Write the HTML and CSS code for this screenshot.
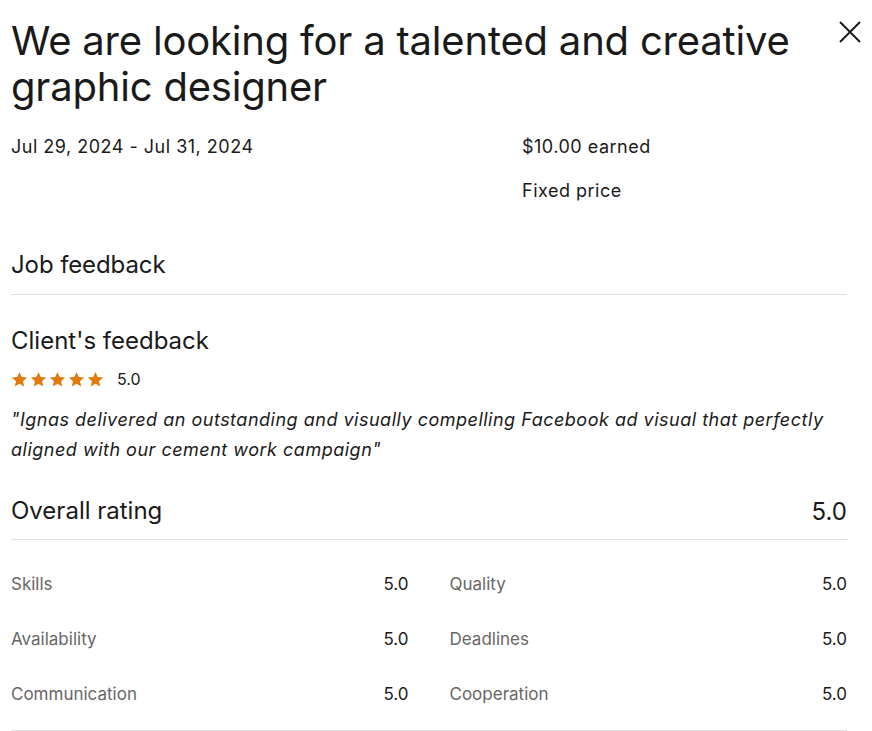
FILE: index.html
```html
<!DOCTYPE html>
<html lang="en">
<head>
<meta charset="UTF-8">
<meta name="viewport" content="width=device-width, initial-scale=1.0">
<title>Job feedback</title>
<link rel="stylesheet" href="styles.css">
</head>
<body>

<div class="modal">
    <div class="header">
        <h1 class="title">We are looking for a talented and creative graphic designer</h1>
        <button class="close" aria-label="Close">
            <svg width="24" height="24" viewBox="0 0 24 24"><path d="M2 2 L22 22 M22 2 L2 22" stroke="#1a1a1a" stroke-width="2" fill="none"/></svg>
        </button>
    </div>

    <div class="meta">
        <div class="meta-col">
            <p>Jul 29, 2024 - Jul 31, 2024</p>
        </div>
        <div class="meta-col">
            <p>$10.00 earned</p>
            <p>Fixed price</p>
        </div>
    </div>

    <h2 class="section-title">Job feedback</h2>
    <hr>

    <h3 class="sub-title">Client's feedback</h3>
    <div class="stars">
        <svg width="17" height="17" viewBox="0 0 24 24"><path d="M12 1.5l3.1 7.1 7.7.7-5.8 5.1 1.7 7.6L12 18l-6.7 4 1.7-7.6-5.8-5.1 7.7-.7z" fill="#e07a0c"/></svg>
        <svg width="17" height="17" viewBox="0 0 24 24"><path d="M12 1.5l3.1 7.1 7.7.7-5.8 5.1 1.7 7.6L12 18l-6.7 4 1.7-7.6-5.8-5.1 7.7-.7z" fill="#e07a0c"/></svg>
        <svg width="17" height="17" viewBox="0 0 24 24"><path d="M12 1.5l3.1 7.1 7.7.7-5.8 5.1 1.7 7.6L12 18l-6.7 4 1.7-7.6-5.8-5.1 7.7-.7z" fill="#e07a0c"/></svg>
        <svg width="17" height="17" viewBox="0 0 24 24"><path d="M12 1.5l3.1 7.1 7.7.7-5.8 5.1 1.7 7.6L12 18l-6.7 4 1.7-7.6-5.8-5.1 7.7-.7z" fill="#e07a0c"/></svg>
        <svg width="17" height="17" viewBox="0 0 24 24"><path d="M12 1.5l3.1 7.1 7.7.7-5.8 5.1 1.7 7.6L12 18l-6.7 4 1.7-7.6-5.8-5.1 7.7-.7z" fill="#e07a0c"/></svg>
        <span class="score">5.0</span>
    </div>
    <p class="quote">"Ignas delivered an outstanding and visually compelling Facebook ad visual that perfectly aligned with our cement work campaign"</p>

    <div class="overall">
        <h3 class="sub-title">Overall rating</h3>
        <span class="overall-score">5.0</span>
    </div>
    <hr class="tight">

    <div class="ratings">
        <div class="rating"><span class="label">Skills</span><span class="value">5.0</span></div>
        <div class="rating"><span class="label">Quality</span><span class="value">5.0</span></div>
        <div class="rating"><span class="label">Availability</span><span class="value">5.0</span></div>
        <div class="rating"><span class="label">Deadlines</span><span class="value">5.0</span></div>
        <div class="rating"><span class="label">Communication</span><span class="value">5.0</span></div>
        <div class="rating"><span class="label">Cooperation</span><span class="value">5.0</span></div>
    </div>
    <hr>
</div>

</body>
</html>
```

FILE: styles.css
```css
body {
    font-family: Inter, "Liberation Sans", Arial, sans-serif;
    margin: 0;
    padding: 0;
    background: #fff;
    color: #1a1a1a;
}

.modal {
    padding: 18px 25px 0 11px;
}

.header {
    display: flex;
    justify-content: space-between;
    align-items: flex-start;
}

.title {
    margin: 0;
    font-size: 40px;
    font-weight: 400;
    line-height: 46px;
    letter-spacing: -0.2px;
    max-width: 800px;
}

.close {
    background: none;
    border: none;
    padding: 0;
    margin: 2px -15px 0 0;
    cursor: pointer;
}

.meta {
    display: flex;
    margin-top: 24px;
}

.meta-col {
    flex: 0 0 511px;
}

.meta-col + .meta-col {
    flex: 1;
}

.meta-col p {
    margin: 0 0 18px;
    font-size: 18px;
    line-height: 26px;
    letter-spacing: 0.5px;
}

.section-title {
    margin: 27px 0 0;
    font-size: 24px;
    font-weight: 400;
    line-height: 32px;
    letter-spacing: -0.1px;
}

hr {
    border: none;
    border-top: 1px solid #e0e0e0;
    margin: 13px 0 0;
}

hr.tight {
    margin-top: 12px;
}

.sub-title {
    margin: 0;
    font-size: 24px;
    font-weight: 400;
    line-height: 32px;
}

hr + .sub-title {
    margin-top: 30px;
}

.stars {
    display: flex;
    align-items: center;
    gap: 2px;
    margin-top: 12px;
}

.stars .score {
    margin-left: 11px;
    font-size: 16px;
}

.quote {
    margin: 16px 0 0;
    font-size: 18px;
    font-style: italic;
    line-height: 30px;
    letter-spacing: 0.5px;
}

.overall {
    display: flex;
    justify-content: space-between;
    align-items: center;
    margin-top: 30px;
}

.overall-score {
    font-size: 24px;
}

.ratings {
    display: grid;
    grid-template-columns: 1fr 1fr;
    column-gap: 41px;
    row-gap: 33px;
    padding: 33px 0 12px;
}

.rating {
    display: flex;
    justify-content: space-between;
    font-size: 17px;
    line-height: 22px;
}

.rating .label {
    color: #676767;
}
```
